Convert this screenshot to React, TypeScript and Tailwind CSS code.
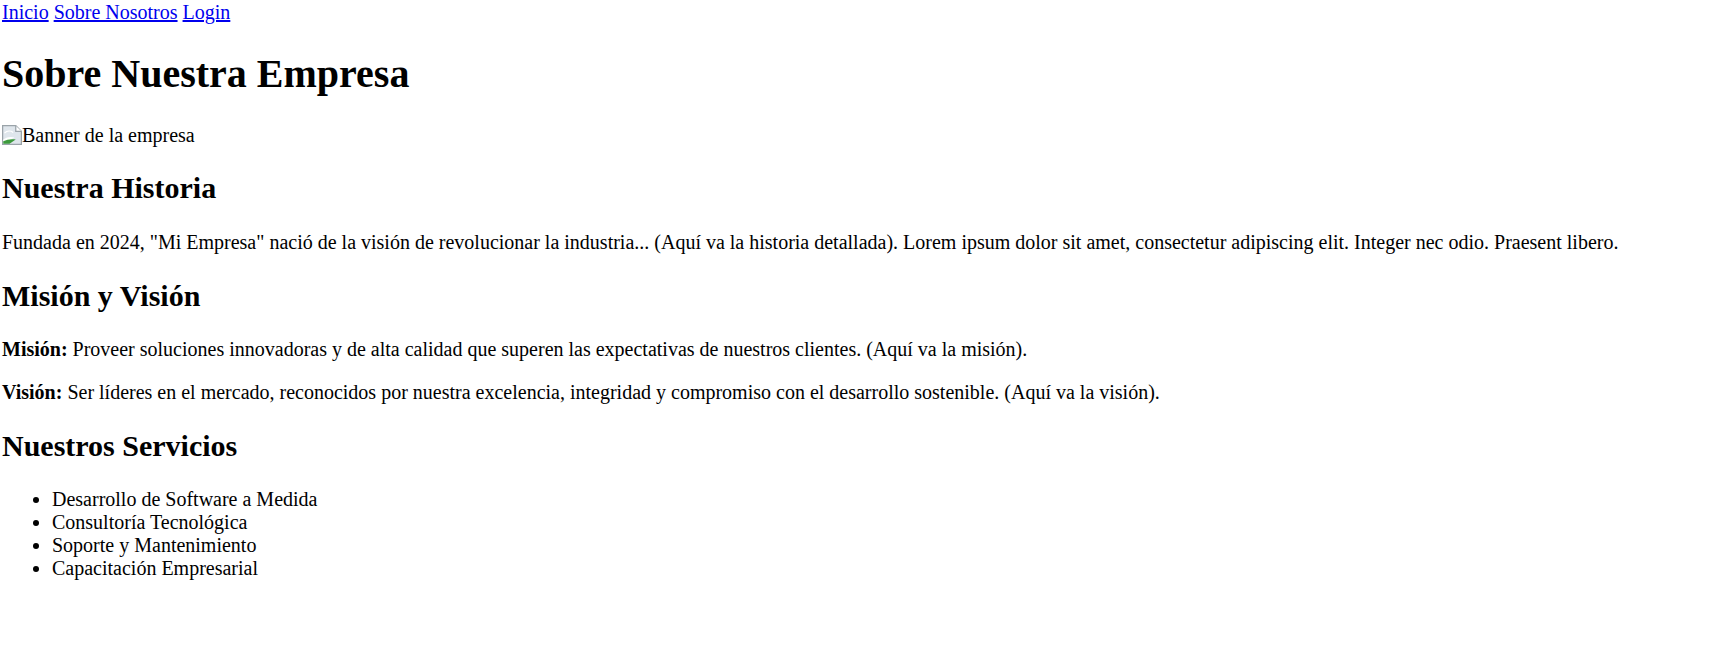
import React from "react";

function BrokenImageIcon() {
  return (
    <svg
      width="20"
      height="20"
      viewBox="0 0 16 16"
      className="inline-block align-[-3px]"
      aria-hidden="true"
    >
      <path d="M0.5 0.5 H11 L15.5 5 V15.5 H0.5 Z" fill="#dfe6ec" stroke="#9aa3a9" strokeWidth="1" />
      <path d="M11 0.5 V5 H15.5" fill="#ffffff" stroke="#9aa3a9" strokeWidth="1" />
      <path d="M1 15 V11.5 C4 9.5 7 9 10 10 L1 15 Z" fill="#ffffff" />
      <path d="M1 15 L1 13 C4 11.5 7 11 11 11.5 L6 15 Z" fill="#3c9a3c" />
      <path d="M2 6.5 C4 4.5 7 4.5 9 6" fill="none" stroke="#ffffff" strokeWidth="1" />
    </svg>
  );
}

export default function App() {
  return (
    <div
      className="bg-white text-black text-[20px] leading-[23px] pl-[2px] pt-[1px] min-h-[654px]"
      style={{ fontFamily: '"Liberation Serif", "Times New Roman", serif' }}
    >
      <nav>
        <a href="#" className="text-[#0000ee] underline">Inicio</a>{" "}
        <a href="#" className="text-[#0000ee] underline">Sobre Nosotros</a>{" "}
        <a href="#" className="text-[#0000ee] underline">Login</a>
      </nav>
      <h1 className="text-[40px] leading-[46px] font-bold my-[26.8px]">Sobre Nuestra Empresa</h1>
      <div>
        <BrokenImageIcon />
        Banner de la empresa
      </div>
      <h2 className="text-[30px] leading-[34.5px] font-bold my-[24.9px]">Nuestra Historia</h2>
      <p className="my-[20px]">
        Fundada en 2024, "Mi Empresa" nació de la visión de revolucionar la industria... (Aquí va la historia detallada). Lorem ipsum dolor sit amet, consectetur adipiscing elit. Integer nec odio. Praesent libero.
      </p>
      <h2 className="text-[30px] leading-[34.5px] font-bold my-[24.9px]">Misión y Visión</h2>
      <p className="my-[20px]">
        <strong className="font-bold">Misión:</strong> Proveer soluciones innovadoras y de alta calidad que superen las expectativas de nuestros clientes. (Aquí va la misión).
      </p>
      <p className="my-[20px]">
        <strong className="font-bold">Visión:</strong> Ser líderes en el mercado, reconocidos por nuestra excelencia, integridad y compromiso con el desarrollo sostenible. (Aquí va la visión).
      </p>
      <h2 className="text-[30px] leading-[34.5px] font-bold my-[24.9px]">Nuestros Servicios</h2>
      <ul className="my-[20px] pl-[50px] list-disc">
        <li>Desarrollo de Software a Medida</li>
        <li>Consultoría Tecnológica</li>
        <li>Soporte y Mantenimiento</li>
        <li>Capacitación Empresarial</li>
      </ul>
    </div>
  );
}
